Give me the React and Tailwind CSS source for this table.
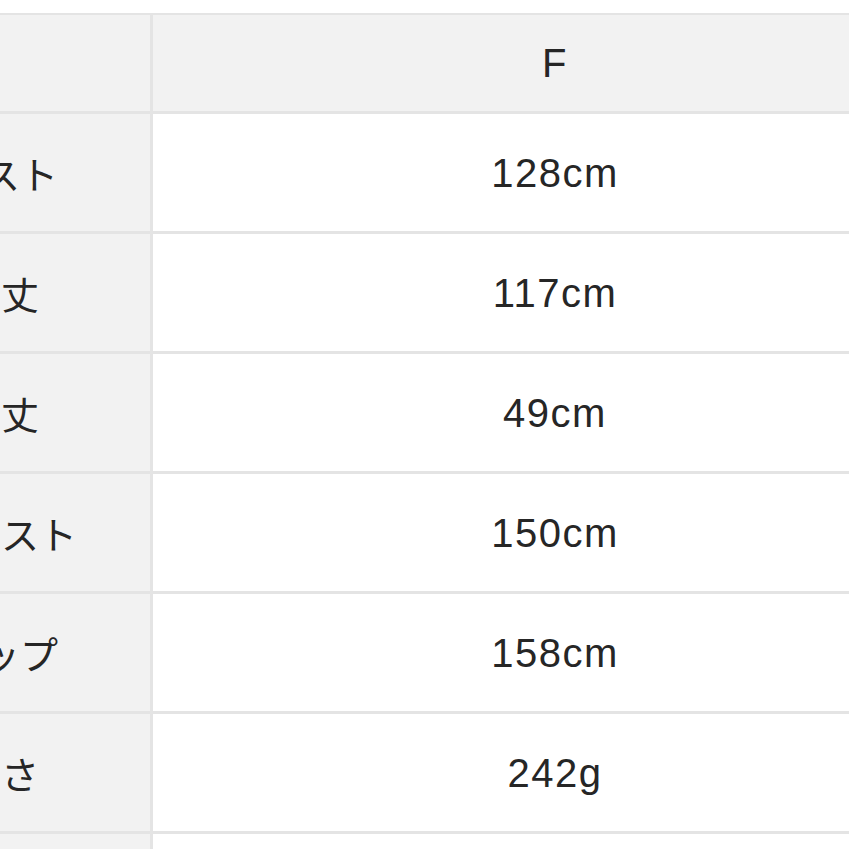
import React from "react";

const rows = [
  ["バスト", "128cm"],
  ["着丈", "117cm"],
  ["袖丈", "49cm"],
  ["ウエスト", "150cm"],
  ["ヒップ", "158cm"],
  ["重さ", "242g"],
  ["", ""],
];

export default function App() {
  return (
    <div className="w-[849px] h-[849px] overflow-hidden bg-white pt-[13px]">
      <div
        className="ml-[-148px] w-[1105px] grid grid-cols-[298px_804px] auto-rows-[117px] gap-[3px] bg-[#e4e4e4] pt-[2px] text-[#262626]"
        style={{ gridTemplateRows: "96px" }}
      >
        <div className="bg-[#f2f2f2]" />
        <div className="bg-[#f2f2f2] flex items-center justify-center text-[40px] tracking-[1.5px] font-['Liberation_Sans',sans-serif]">
          F
        </div>
        {rows.map(([label, value], i) => (
          <React.Fragment key={i}>
            <div className="bg-[#f2f2f2] flex items-center justify-center text-[38px] font-['Noto_Sans_CJK_JP',sans-serif]">
              {label}
            </div>
            <div className="bg-white flex items-center justify-center text-[40px] tracking-[1.5px] font-['Liberation_Sans','Noto_Sans_CJK_JP',sans-serif]">
              {value}
            </div>
          </React.Fragment>
        ))}
      </div>
    </div>
  );
}
